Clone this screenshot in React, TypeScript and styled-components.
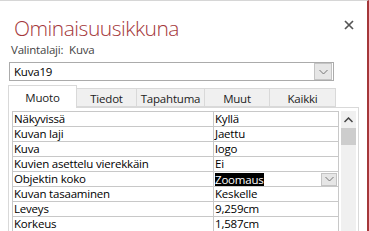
import { createGlobalStyle, styled } from 'styled-components';

const GlobalStyle = createGlobalStyle`
	html, body {
		margin: 0;
		padding: 0;
		background: #ffffff;
	}
	body {
		font-family: 'Open Sans', 'Noto Sans', sans-serif;
	}
`;

interface Property {
	label: string;
	value: string;
	selected?: boolean;
}

const properties: Property[] = [
	{ label: 'Näkyvissä', value: 'Kyllä' },
	{ label: 'Kuvan laji', value: 'Jaettu' },
	{ label: 'Kuva', value: 'logo' },
	{ label: 'Kuvien asettelu vierekkäin', value: 'Ei' },
	{ label: 'Objektin koko', value: 'Zoomaus', selected: true },
	{ label: 'Kuvan tasaaminen', value: 'Keskelle' },
	{ label: 'Leveys', value: '9,259cm' },
	{ label: 'Korkeus', value: '1,587cm' },
];

const tabs = ['Muoto', 'Tiedot', 'Tapahtuma', 'Muut', 'Kaikki'];
const tabWidths = [69, 60, 68, 65, 66];

const Chevron = ({ up }: { up?: boolean }) => (
	<svg width='9' height='6' viewBox='0 0 9 6'>
		<path
			d={up ? 'M0.5 5 L4.5 1 L8.5 5' : 'M0.5 1 L4.5 5 L8.5 1'}
			fill='none'
			stroke={up ? '#444' : '#777'}
			strokeWidth={up ? 1.5 : 1}
		/>
	</svg>
);

const Pane = styled.div`
	width: 369px;
	height: 231px;
	box-sizing: border-box;
	border-top: 1px solid #d6d6d6;
	border-right: 2px solid #a4373a;
	overflow: hidden;
	display: flex;
	flex-direction: column;
	padding: 0 0 0 8px;
`;

const Header = styled.div`
	display: flex;
	align-items: flex-start;
	justify-content: space-between;
	padding: 13px 13px 0 6px;
`;

const Title = styled.h1`
	margin: 0;
	font-size: 21px;
	line-height: 28px;
	font-weight: 300;
	letter-spacing: -0.5px;
	color: #a4373a;
`;

const CloseButton = styled.div`
	margin-top: 6px;
	width: 10px;
	height: 10px;
	display: flex;
`;

const SelectionLabel = styled.div`
	font-size: 11.5px;
	line-height: 16px;
	color: #444;
	padding-left: 3px;
	letter-spacing: -0.2px;
	word-spacing: 3px;
`;

const Combo = styled.div`
	margin-top: 4px;
	margin-left: 1px;
	width: 325px;
	height: 22px;
	box-sizing: border-box;
	border: 1px solid #ababab;
	display: flex;
	align-items: center;
	justify-content: space-between;
	padding: 0 1px 0 4px;
	font-size: 11.5px;
	color: #000;
	letter-spacing: -0.2px;
`;

const ComboButton = styled.div<{ $small?: boolean }>`
	width: ${(p) => (p.$small ? 16 : 18)}px;
	height: ${(p) => (p.$small ? 13 : 17)}px;
	box-sizing: border-box;
	border: 1px solid #c4c4c4;
	background: #e6e6e6;
	display: flex;
	align-items: center;
	justify-content: center;
`;

const TabBar = styled.div`
	margin-top: 4px;
	display: flex;
	align-items: flex-end;
	height: 22px;
	position: relative;
	z-index: 1;
`;

const Tab = styled.div<{ $active?: boolean }>`
	box-sizing: border-box;
	height: ${(p) => (p.$active ? 23 : 19)}px;
	margin-bottom: ${(p) => (p.$active ? -1 : 0)}px;
	background: ${(p) => (p.$active ? '#ffffff' : '#f0f0f0')};
	border: 1px solid #d9d9d9;
	border-bottom: ${(p) => (p.$active ? 'none' : '1px solid #d9d9d9')};
	border-left: ${(p) => (p.$active ? '1px solid #d9d9d9' : 'none')};
	display: flex;
	align-items: center;
	justify-content: center;
	font-size: 11.5px;
	letter-spacing: -0.2px;
	color: #222;
	padding-top: ${(p) => (p.$active ? 0 : 1)}px;
`;

const Panel = styled.div`
	flex: 1;
	width: 351px;
	box-sizing: border-box;
	border: 1px solid #d9d9d9;
	border-bottom: none;
	padding: 3px 0 0 3px;
	display: flex;
	align-items: flex-start;
	gap: 2px;
`;

const Grid = styled.div`
	width: 327px;
	border-top: 1px solid #c8c8c8;
	border-left: 1px solid #c8c8c8;
	border-right: 1px solid #c8c8c8;
	box-sizing: border-box;
`;

const Row = styled.div`
	display: grid;
	grid-template-columns: 200px 1fr;
	height: 15px;
	box-sizing: border-box;
	border-bottom: 1px solid #c8c8c8;
`;

const Cell = styled.div`
	font-size: 11.5px;
	line-height: 14px;
	letter-spacing: -0.2px;
	color: #000;
	padding-left: 1px;
	white-space: nowrap;
	overflow: hidden;
	& + & {
		border-left: 1px solid #c8c8c8;
		display: flex;
		align-items: center;
		justify-content: space-between;
		padding-right: 1px;
	}
`;

const Selected = styled.span`
	background: #000;
	color: #fff;
	line-height: 13px;
`;

const Scrollbar = styled.div`
	width: 15px;
	height: 120px;
	background: #f0f0f0;
	display: flex;
	flex-direction: column;
	align-items: center;
`;

const ScrollArrow = styled.div`
	height: 17px;
	width: 100%;
	display: flex;
	align-items: center;
	justify-content: center;
`;

const ScrollThumb = styled.div`
	width: 100%;
	height: 17px;
	background: #cdcdcd;
`;

export default function App() {
	return (
		<>
			<GlobalStyle />
			<Pane>
				<Header>
					<Title>Ominaisuusikkuna</Title>
					<CloseButton>
						<svg width='10' height='10' viewBox='0 0 10 10'>
							<path d='M1 1 L9 9 M9 1 L1 9' stroke='#555' strokeWidth='1.7' />
						</svg>
					</CloseButton>
				</Header>
				<SelectionLabel>Valintalaji: Kuva</SelectionLabel>
				<Combo>
					<span>Kuva19</span>
					<ComboButton>
						<Chevron />
					</ComboButton>
				</Combo>
				<TabBar>
					{tabs.map((t, i) => (
						<Tab key={t} $active={i === 0} style={{ width: tabWidths[i] }}>
							{t}
						</Tab>
					))}
				</TabBar>
				<Panel>
					<Grid>
						{properties.map((p) => (
							<Row key={p.label}>
								<Cell>{p.label}</Cell>
								<Cell>
									{p.selected ? <Selected>{p.value}</Selected> : <span>{p.value}</span>}
									{p.selected && (
										<ComboButton $small>
											<Chevron />
										</ComboButton>
									)}
								</Cell>
							</Row>
						))}
					</Grid>
					<Scrollbar>
						<ScrollArrow>
							<Chevron up />
						</ScrollArrow>
						<ScrollThumb />
					</Scrollbar>
				</Panel>
			</Pane>
		</>
	);
}
